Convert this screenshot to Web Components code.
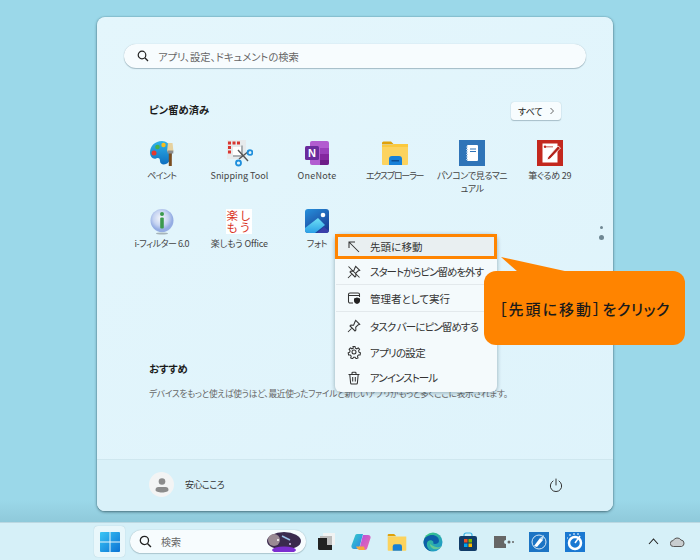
<!DOCTYPE html>
<html lang="ja"><head><meta charset="utf-8"><title>Start</title>
<style>
html,body{margin:0;padding:0;height:560px;overflow:hidden}
body{font-family:"Noto Sans CJK JP","Noto Sans",sans-serif;background:#9bd8e9;color:#222}
</style></head><body>
<x-desktop>
  <x-start>
    <x-search-box slot="search"></x-search-box>
    <x-tile label="ペイント" ls="-.75"><svg viewBox="0 0 28 28" width="28" height="28"><defs><linearGradient id="pa" x1="0" y1="0" x2="0" y2="1"><stop offset="0" stop-color="#2fb4ea"/><stop offset="1" stop-color="#0f6fc0"/></linearGradient></defs><path d="M14 2C7 2 2 7 2 13.500c0 4 3 7 6 6 3-1 4 0 4 2.500 0 3 3 4 6 3 2-.7 4-3 5-6l1.500-9C22 5 18 2 14 2z" fill="url(#pa)"/><circle cx="9.500" cy="8" r="2.300" fill="#46b048"/><circle cx="15.500" cy="6" r="2.200" fill="#f5bd1f"/><circle cx="6" cy="14" r="2.500" fill="#e5392f"/><rect x="20.800" y="14" width="3" height="13" fill="#7a4d20"/><path d="M20 4h4.500l1 8.500h-6.500z" fill="#e6d2a0"/><rect x="19.500" y="11.500" width="5.800" height="3" fill="#8b8d8f"/></svg></x-tile>
    <x-tile label="Snipping Tool"><svg viewBox="0 0 28 28" width="28" height="28"><rect x="2" y="1" width="19" height="19" fill="#e6eaec"/><g fill="#d8352f"><rect x="3" y="2.500" width="3" height="3"/><rect x="7.500" y="2.500" width="3" height="3"/><rect x="12" y="2.500" width="3" height="3"/><rect x="3" y="7" width="3" height="3"/><rect x="3" y="11.500" width="3" height="3"/></g><rect x="8" y="8" width="8" height="8" fill="#fff"/><path d="M17 6.500V17H8" fill="none" stroke="#9aa0a4" stroke-width="1.600"/><path d="M14 20l10-8M23 22L13 11" stroke="#555" stroke-width="1.400" fill="none"/><circle cx="13.500" cy="24" r="2.500" fill="none" stroke="#1f8fdc" stroke-width="1.800"/><circle cx="25" cy="13.500" r="2.400" fill="none" stroke="#1f8fdc" stroke-width="1.800"/></svg></x-tile>
    <x-tile label="OneNote" ls=".25"><svg viewBox="0 0 28 28" width="28" height="28"><rect x="7" y="2" width="19" height="24" rx="2" fill="#b25cd0"/><rect x="17" y="9" width="9" height="6" fill="#9a40bb"/><rect x="17" y="15" width="9" height="6" fill="#84279f"/><path d="M17 21h9v3a2 2 0 0 1-2 2h-7z" fill="#6d1c87"/><rect x="2" y="7" width="14" height="14" rx="1.500" fill="#6a2b9c"/><text x="9" y="18" font-family="Liberation Sans" font-weight="700" font-size="11" fill="#fff" text-anchor="middle">N</text></svg></x-tile>
    <x-tile label="エクスプローラー" ls="-1.2"><svg viewBox="0 0 28 28" width="28" height="28"><path d="M1 4a1.500 1.500 0 0 1 1.500-1.500H10l3 3h-12z" fill="#dfa10a"/><path d="M1 6h26v19a1 1 0 0 1-1 1H2a1 1 0 0 1-1-1z" fill="#fcd35e"/><path d="M1 6h10l2-1h14v3H1z" fill="#fbc93d"/><path d="M8 26v-6a3 3 0 0 1 3-3h7a3 3 0 0 1 3 3v6z" fill="#1780d8"/><rect x="10.500" y="21" width="7.500" height="1.500" fill="#0a4f96"/></svg></x-tile>
    <x-tile label="パソコンで見るマニュアル" ls="-.4"><svg viewBox="0 0 28 28" width="28" height="28"><rect x="1" y="1" width="26" height="26" fill="#2f74b8"/><rect x="9" y="6" width="11" height="16" rx="1" fill="#fff"/><path d="M8 8h2M8 10.500h2M8 13h2M8 15.500h2M8 18h2M8 20.500h2" stroke="#a9c8e6" stroke-width="1"/><path d="M12 10h6M12 12.500h6" stroke="#2f74b8" stroke-width="1"/></svg></x-tile>
    <x-tile label="筆ぐるめ 29" ls="-.2"><svg viewBox="0 0 28 28" width="28" height="28"><rect x="1" y="1" width="26" height="26" fill="#c3281e"/><rect x="6.500" y="4.500" width="15" height="19" fill="#fff"/><rect x="9" y="7" width="8" height="1.500" fill="#d9908a"/><circle cx="9" cy="7.700" r="1.200" fill="#c3281e"/><path d="M12 18L22 7l2.500 2-10.500 11-3 1z" fill="#b3231b" stroke="#fff" stroke-width=".8"/></svg></x-tile>
    <x-tile label="i-フィルター 6.0" ls="-.45"><svg viewBox="0 0 28 28" width="28" height="28"><defs><radialGradient id="b" cx=".45" cy=".4"><stop offset="0" stop-color="#f6f8fc"/><stop offset=".65" stop-color="#c6d4f1"/><stop offset="1" stop-color="#95ade3"/></radialGradient></defs><ellipse cx="14" cy="26.500" rx="6" ry="1" fill="#a6b4ba"/><circle cx="14" cy="13.500" r="11.500" fill="url(#b)"/><circle cx="14" cy="7" r="2" fill="#3c9a4d"/><rect x="12.200" y="10.500" width="3.600" height="11" rx="1" fill="#3c9a4d"/></svg></x-tile>
    <x-tile label="楽しもう Office" ls="-.15"><div style="width:26px;height:25px;background:#fff;color:#d9331f;font:400 11.500px/12.500px 'Noto Sans CJK JP',sans-serif;text-align:center;letter-spacing:1.500px">楽し<br>もう</div></x-tile>
    <x-tile label="フォト" ls="-.3"><svg viewBox="0 0 28 28" width="28" height="28"><defs><linearGradient id="p" x1="0" y1="0" x2=".6" y2="1"><stop offset="0" stop-color="#2690dc"/><stop offset="1" stop-color="#1b3f96"/></linearGradient><linearGradient id="p2" x1="0" y1="0" x2="0" y2="1"><stop offset="0" stop-color="#6fe0f5"/><stop offset="1" stop-color="#2a9fe6"/></linearGradient></defs><rect x="2" y="2" width="24" height="24" rx="3" fill="url(#p)"/><circle cx="20" cy="8" r="2.300" fill="#fff"/><path d="M14 26l7-6 5 4v-.000a3 3 0 0 1-3 2z" fill="#3b3faa"/><path d="M2 21L15 11l7 7-10 8H5a3 3 0 0 1-3-3z" fill="url(#p2)"/></svg></x-tile>
    <x-context-menu slot="menu"></x-context-menu>
    <x-callout slot="callout"><span style="letter-spacing:2px">［先頭に移動］</span><span style="letter-spacing:.5px">をクリック</span></x-callout>
  </x-start>
  <x-taskbar></x-taskbar>
</x-desktop>
<script>
function def(name, html, setup){
  customElements.define(name, class extends HTMLElement{
    constructor(){super();this.attachShadow({mode:'open'});}
    connectedCallback(){ this.shadowRoot.innerHTML = typeof html==='function'?html(this):html; if(setup)setup(this); }
  });
}
const JP='"Noto Sans CJK JP","Noto Sans",sans-serif';
def('x-desktop',`<style>:host{display:flex;flex-direction:column;width:700px;height:560px;position:relative;background:#9bd8e9}
.top{flex:none;height:522px;padding:17px 0 0 97px;box-sizing:border-box;background:linear-gradient(#9bd8e9 0,#9bd8e9 500px,#8fc9da 522px)}</style>
<div class="top"><slot></slot></div><slot name="bar"></slot>`,el=>{
  const tb=el.querySelector('x-taskbar'); tb.slot='bar';
});
def('x-start',`<style>:host{display:flex;flex-direction:column;width:516px;height:494px;box-sizing:border-box;position:relative;border-radius:8px;background:linear-gradient(150deg,#e4f6fc,#def3fb);box-shadow:0 1px 3px rgba(30,60,70,.65),0 0 1px rgba(30,60,70,.6);font-family:${JP};font-feature-settings:"palt"}
.main{flex:1;padding:27px 27px 0 27px;min-height:0}
.head{display:flex;justify-content:space-between;align-items:center;margin:34px 25px 0 25px;height:18px}
h2{margin:0;font-size:10.300px;font-weight:700;color:#1b1b1b;line-height:16px}
.head h2{margin-top:-2px}
.all{width:50px;height:18px;box-sizing:border-box;border-radius:3px;background:#f7fcfe;box-shadow:0 1px 1px rgba(70,100,115,.35),0 0 1px rgba(70,100,115,.35);display:flex;align-items:center;justify-content:space-between;padding:0 5px 0 7px;font-size:9px;color:#222}
.grid{display:grid;grid-template-columns:repeat(6,77.6px);grid-auto-rows:68px;margin:19px 0 0 -1px}
.rec{position:absolute;left:52px;top:344px}
.rec h2{line-height:16px}
.rec p{margin:10px 0 0;font-size:8.700px;line-height:14px;color:#666;white-space:nowrap;letter-spacing:-.3px}
.foot{flex:none;height:52px;border-top:1px solid #cfe7ef;box-sizing:border-box;background:#d9f1f9;border-radius:0 0 8px 8px;display:flex;align-items:center;padding:0 50px 2px 52px}
.av{width:25px;height:25px;border-radius:50%;background:#f3f4f4;display:flex;align-items:center;justify-content:center;flex:none}
.name{font-size:9px;margin-left:11px;color:#333;flex:1;letter-spacing:-.5px}
.dots{position:absolute;left:502px;top:209px;display:flex;flex-direction:column;align-items:center;gap:6px}
.dots i{display:block;background:#6f8793;border-radius:50%}
</style>
<div class="main"><slot name="search"></slot>
<div class="head"><h2>ピン留め済み</h2><div class="all"><span>すべて</span><svg width="8" height="8" viewBox="0 0 8 8"><path d="M2.500 1l3 3-3 3" fill="none" stroke="#555" stroke-width=".9"/></svg></div></div>
<div class="grid"><slot></slot></div>
<div class="rec"><h2>おすすめ</h2><p>デバイスをもっと使えば使うほど、最近使ったファイルと新しいアプリがもっと多くここに表示されます。</p></div>
</div>
<div class="dots"><i style="width:3px;height:3px"></i><i style="width:5px;height:5px"></i></div>
<div class="foot"><div class="av"><svg width="16" height="16" viewBox="0 0 16 16"><circle cx="8" cy="4.500" r="3.300" fill="#8b8b8b"/><path d="M1.500 13a3 3 0 0 1 3-3h7a3 3 0 0 1 3 3c0 1.500-3 2.500-6.500 2.500S1.500 14.500 1.500 13z" fill="#8b8b8b"/></svg></div><div class="name">安心こころ</div>
<svg width="14" height="14" viewBox="0 0 14 14"><path d="M4 3a5.700 5.700 0 1 0 6 0M7 1v6" fill="none" stroke="#333" stroke-width="1" stroke-linecap="round"/></svg></div>
<slot name="menu"></slot><slot name="callout"></slot>`);
def('x-search-box',`<style>:host{display:flex;align-items:center;width:462px;height:24px;box-sizing:border-box;border-radius:12px;background:#f7fcfe;box-shadow:0 1px 1px rgba(80,110,125,.4),0 0 1px rgba(80,110,125,.4);padding-left:13px;font-family:${JP};font-size:10.300px;color:#666}
span{margin-left:9px}</style><svg width="12" height="12" viewBox="0 0 12 12"><circle cx="5" cy="5" r="3.800" fill="none" stroke="#222" stroke-width="1.200"/><path d="M7.800 7.800L11 11" stroke="#222" stroke-width="1.300"/></svg><span>アプリ、設定、ドキュメントの検索</span>`);
def('x-tile',el=>`<style>:host{display:flex;flex-direction:column;align-items:center;font-family:${JP}}
.ic{height:28px;display:flex;align-items:center;justify-content:center}
.l{margin-top:2px;width:72px;text-align:center;font-size:9px;line-height:13px;color:#444;letter-spacing:${el.getAttribute('ls')||0}px}</style>
<div class="ic"><slot></slot></div><div class="l">${el.getAttribute('label')}</div>`);
const mi=(icon,t,ls,h,hi)=>`<x-menu-item ${hi?'hi':''} style="letter-spacing:${ls}px;height:${h}px">${icon}<span>${t}</span></x-menu-item>`;
const st='fill="none" stroke="#333" stroke-width="1.050"';
const pin='M8.700 1.300l4 4-1.700.7-2.300 2.300.2 2.700-.9.900-5-5 .9-.9 2.700.2L8 2.700zM4.500 9.500L1 13';
def('x-context-menu',`<style>:host{position:absolute;left:238px;top:217px;width:162px;height:158px;box-sizing:border-box;border-radius:6px;background:#f4fafc;box-shadow:0 1px 4px rgba(50,80,95,.45);display:flex;flex-direction:column;padding:1px 0 0 1px;font-family:${JP}}
.hr{height:1px;background:#e3e9ec;flex:none}
.g{height:1px;flex:none}</style>
${mi(`<svg width="14" height="14" viewBox="0 0 14 14"><path d="M2 2l10 10M2 8V2h6" ${st}/></svg>`,'先頭に移動',.1,23,1)}
<div class="g"></div>
${mi(`<svg width="14" height="14" viewBox="0 0 14 14"><path d="${pin}M1.500 1.500l11 11" ${st}/></svg>`,'スタートからピン留めを外す',-1,25)}
<div class="hr"></div>
${mi(`<svg width="14" height="14" viewBox="0 0 14 14"><path d="M6 12H3a1.500 1.500 0 0 1-1.500-1.500v-7A1.500 1.500 0 0 1 3 2h8a1.500 1.500 0 0 1 1.500 1.500V6M1.500 4.500h11" ${st}/><path d="M10 6.500l3 1v2.500c0 1.500-1.500 2.500-3 3-1.500-.5-3-1.500-3-3V7.500z" fill="#222"/></svg>`,'管理者として実行',0,26)}
<div class="hr"></div>
<div class="g"></div>
${mi(`<svg width="14" height="14" viewBox="0 0 14 14"><path d="${pin}" ${st}/></svg>`,'タスク バーにピン留めする',-.9,26)}
${mi(`<svg width="14" height="14" viewBox="0 0 14 14"><circle cx="7" cy="7" r="2" ${st}/><path d="M6 1.500h2l.4 1.700 1.400.6 1.500-.9 1.300 1.500-1 1.400.4 1.400 1.500.7-.4 2-1.700.1-.9 1.200.5 1.700-1.900.8-1-1.400H6.600l-1 1.400-1.900-.8.5-1.700-.9-1.200-1.700-.1-.4-2 1.500-.7.4-1.400-1-1.400 1.300-1.500 1.500.9 1.400-.6z" ${st}/></svg>`,'アプリの設定',-.7,26)}
${mi(`<svg width="14" height="14" viewBox="0 0 14 14"><path d="M1.500 3.500h11M5 3.500V2a.8.8 0 0 1 .8-.8h2.400A.8.8 0 0 1 9 2v1.500M2.800 3.500l.8 8.500a1 1 0 0 0 1 1h4.800a1 1 0 0 0 1-1l.8-8.500M5.700 6v4.500M8.300 6v4.500" ${st}/></svg>`,'アンインストール',-.95,25)}`);
def('x-menu-item',el=>`<style>:host{display:flex;align-items:center;flex:none;box-sizing:border-box;padding-left:11px;font-size:10.500px;color:#333;margin-right:1px;white-space:nowrap}
:host([hi]){background:#e9eff1;outline:3px solid #ff8400;outline-offset:-2px}
::slotted(svg){flex:none;margin-right:9px}</style><slot></slot>`);
def('x-callout',`<style>:host{position:absolute;left:387px;top:254px;width:201px;height:74px;box-sizing:border-box;border-radius:12px;background:#ff8400;display:flex;align-items:center;justify-content:center;font-family:${JP};font-size:15px;font-weight:500;color:#1a1a1a;white-space:nowrap;font-feature-settings:"palt"}
svg{position:absolute;left:17px;top:-14px}</style>
<svg width="67" height="15" viewBox="0 0 67 15"><path d="M0 0L66 14.500V15H17z" fill="#ff8400"/></svg><slot></slot>`);
const ti=s=>`<div class="c">${s}</div>`;
def('x-taskbar',`<style>:host{display:flex;align-items:center;flex:none;width:700px;height:38px;box-sizing:border-box;padding-left:94px;background:#d6f0f8;border-top:1px solid #bcd8e2;font-family:${JP}}
.st{width:31px;height:31px;border-radius:4px;background:#e9f7fb;box-shadow:0 0 1px rgba(90,120,130,.4);display:flex;align-items:center;justify-content:center;flex:none}
.sb{width:176px;height:23px;margin-left:5px;border-radius:12px;background:#f7fcfe;box-shadow:0 0 1px rgba(90,120,130,.6),0 1px 1px rgba(90,120,130,.3);display:flex;align-items:center;padding-left:9px;box-sizing:border-box;font-size:10px;color:#666;flex:none;position:relative;overflow:hidden}
.sb span{margin-left:9px}
.gem{position:absolute;left:136px;top:2px}
.c{width:35.600px;display:flex;justify-content:center;align-items:center;flex:none}
.tray{margin-left:auto;display:flex;align-items:center;gap:11px;padding-right:15px}</style>
<div class="st"><svg width="20" height="20" viewBox="0 0 20 20"><defs><linearGradient id="w" x1="0" y1="0" x2="1" y2="1"><stop offset="0" stop-color="#3bc6f5"/><stop offset="1" stop-color="#0a72d4"/></linearGradient></defs><path d="M0 1a1 1 0 0 1 1-1h8.500v9.500H0zM10.500 0H19a1 1 0 0 1 1 1v8.500h-9.500zM0 10.500h9.500V20H1a1 1 0 0 1-1-1zM10.500 10.500H20V19a1 1 0 0 1-1 1h-8.500z" fill="url(#w)"/></svg></div>
<div class="sb"><svg width="13" height="13" viewBox="0 0 12 12"><circle cx="5" cy="5" r="3.800" fill="none" stroke="#222" stroke-width="1.200"/><path d="M7.800 7.800L11 11" stroke="#222" stroke-width="1.300"/></svg><span>検索</span>
<svg class="gem" width="37" height="20" viewBox="0 0 37 20"><ellipse cx="18" cy="9" rx="17" ry="9" fill="#3b2a4e"/><ellipse cx="8" cy="8" rx="6" ry="6" fill="#9a8a94"/><path d="M16 4l8 4" stroke="#9bc0e8" stroke-width="1.500"/><circle cx="12" cy="8" r="1" fill="#fff"/><circle cx="24" cy="12" r="1" fill="#d8c0f0"/><ellipse cx="18" cy="18" rx="12" ry="3.500" fill="#7c2fd0"/></svg></div>
<div style="display:flex;margin-left:2px;flex:none">
${ti(`<svg width="20" height="20" viewBox="0 0 20 20"><rect x="7" y="1" width="12" height="12" fill="#f1f3f3"/><rect x="4" y="4" width="12" height="12" fill="#bdbdbd"/><path d="M2 6h9v7h5v5H3.500A1.500 1.500 0 0 1 2 16.500z" fill="#222"/></svg>`)}
${ti(`<svg width="20" height="20" viewBox="0 0 20 20"><defs><linearGradient id="c1" x1="0" y1="0" x2="1" y2="1"><stop offset="0" stop-color="#37d0c8"/><stop offset="1" stop-color="#2a7fe8"/></linearGradient><linearGradient id="c2" x1="0" y1="0" x2="1" y2="1"><stop offset="0" stop-color="#b04fe0"/><stop offset="1" stop-color="#f26ba8"/></linearGradient></defs><path d="M6 2h6L8 17H3C1 17 0 15 .5 13.500L4 4c.3-1.200 1-2 2-2z" fill="url(#c1)"/><path d="M8 18h6c1 0 2-1 2.300-2L19.500 6c.5-1.500-.5-3-2.500-3h-5z" fill="url(#c2)"/><path d="M5 14.500c1 2 2 3.500 4 3.500h5l-1-3.500z" fill="#f8a83a"/></svg>`)}
${ti(`<svg width="20" height="19" viewBox="0 0 28 26" ><path d="M1 4a1.500 1.500 0 0 1 1.500-1.500H10l3 3h-12z" fill="#dfa10a"/><path d="M1 6h26v19a1 1 0 0 1-1 1H2a1 1 0 0 1-1-1z" fill="#fcd35e"/><path d="M8 26v-6a3 3 0 0 1 3-3h7a3 3 0 0 1 3 3v6z" fill="#1780d8"/></svg>`)}
${ti(`<svg width="20" height="20" viewBox="0 0 20 20"><defs><linearGradient id="e1" x1="0" y1="0" x2="1" y2="1"><stop offset="0" stop-color="#3fd17a"/><stop offset="1" stop-color="#1a8fd8"/></linearGradient></defs><circle cx="10" cy="10" r="9.500" fill="url(#e1)"/><path d="M.5 10C1 5 5 3 9 3c4 0 7 2.500 7 6 0 2-2 3-4 3-2 0-2-1-1.500-2C9 7.500 5 7.500 4 11c-.8 4 2 8 6 8.500C5 19.500.5 15.500.5 10z" fill="#0d5fa8"/><path d="M7 12c0 4 4 6 8 5 1.500-.5 3-1.500 3.500-3-2 1.500-4.500 1.500-6.500.8C10 14 8.500 13 7 12z" fill="#8de07a" opacity=".6"/></svg>`)}
${ti(`<svg width="20" height="20" viewBox="0 0 20 20"><path d="M6 5V3a2 2 0 0 1 2-2h4a2 2 0 0 1 2 2v2" fill="none" stroke="#3ab4e8" stroke-width="1.200"/><rect x="1" y="4" width="18" height="15" rx="2" fill="#123c68"/><rect x="6" y="7" width="3.500" height="3.500" fill="#f25022"/><rect x="10.500" y="7" width="3.500" height="3.500" fill="#7fba00"/><rect x="6" y="11.500" width="3.500" height="3.500" fill="#00a4ef"/><rect x="10.500" y="11.500" width="3.500" height="3.500" fill="#ffb900"/></svg>`)}
${ti(`<svg width="20" height="14" viewBox="0 0 20 14"><path d="M0 1h12v4a2 2 0 1 0 0 4v4H0z" fill="#666"/><circle cx="15" cy="7" r="1.500" fill="#666"/><circle cx="19" cy="7" r="1" fill="#666"/></svg>`)}
${ti(`<svg width="20" height="20" viewBox="0 0 20 20"><rect width="20" height="20" fill="#1c74c4"/><circle cx="10" cy="10" r="7" fill="none" stroke="#d6e8f6" stroke-width="1"/><path d="M5 14l6-8 3 2-6 7z" fill="#fff"/><path d="M11 6l4-3-1 5z" fill="#bcdcf2"/></svg>`)}
${ti(`<svg width="20" height="20" viewBox="0 0 20 20"><rect width="20" height="20" fill="#1a78d2"/><circle cx="10" cy="11" r="6" fill="none" stroke="#fff" stroke-width="2.500"/><path d="M10 11l5-7" stroke="#fff" stroke-width="1.500"/><path d="M4 3h2M8 2h2M12 2h2M2 6h1" stroke="#fff" stroke-width="1"/></svg>`)}
</div>
<div class="tray"><svg width="11" height="7" viewBox="0 0 11 7"><path d="M1 6l4.500-5L10 6" fill="none" stroke="#222" stroke-width="1.100"/></svg><svg width="15" height="10" viewBox="0 0 15 10"><path d="M3.500 9.500a3 3 0 0 1-.3-6A4.500 4.500 0 0 1 11 3a3.300 3.300 0 0 1 .5 6.500z" fill="#c9cdcf" stroke="#555" stroke-width="1"/></svg></div>`);
</script>
</body></html>
